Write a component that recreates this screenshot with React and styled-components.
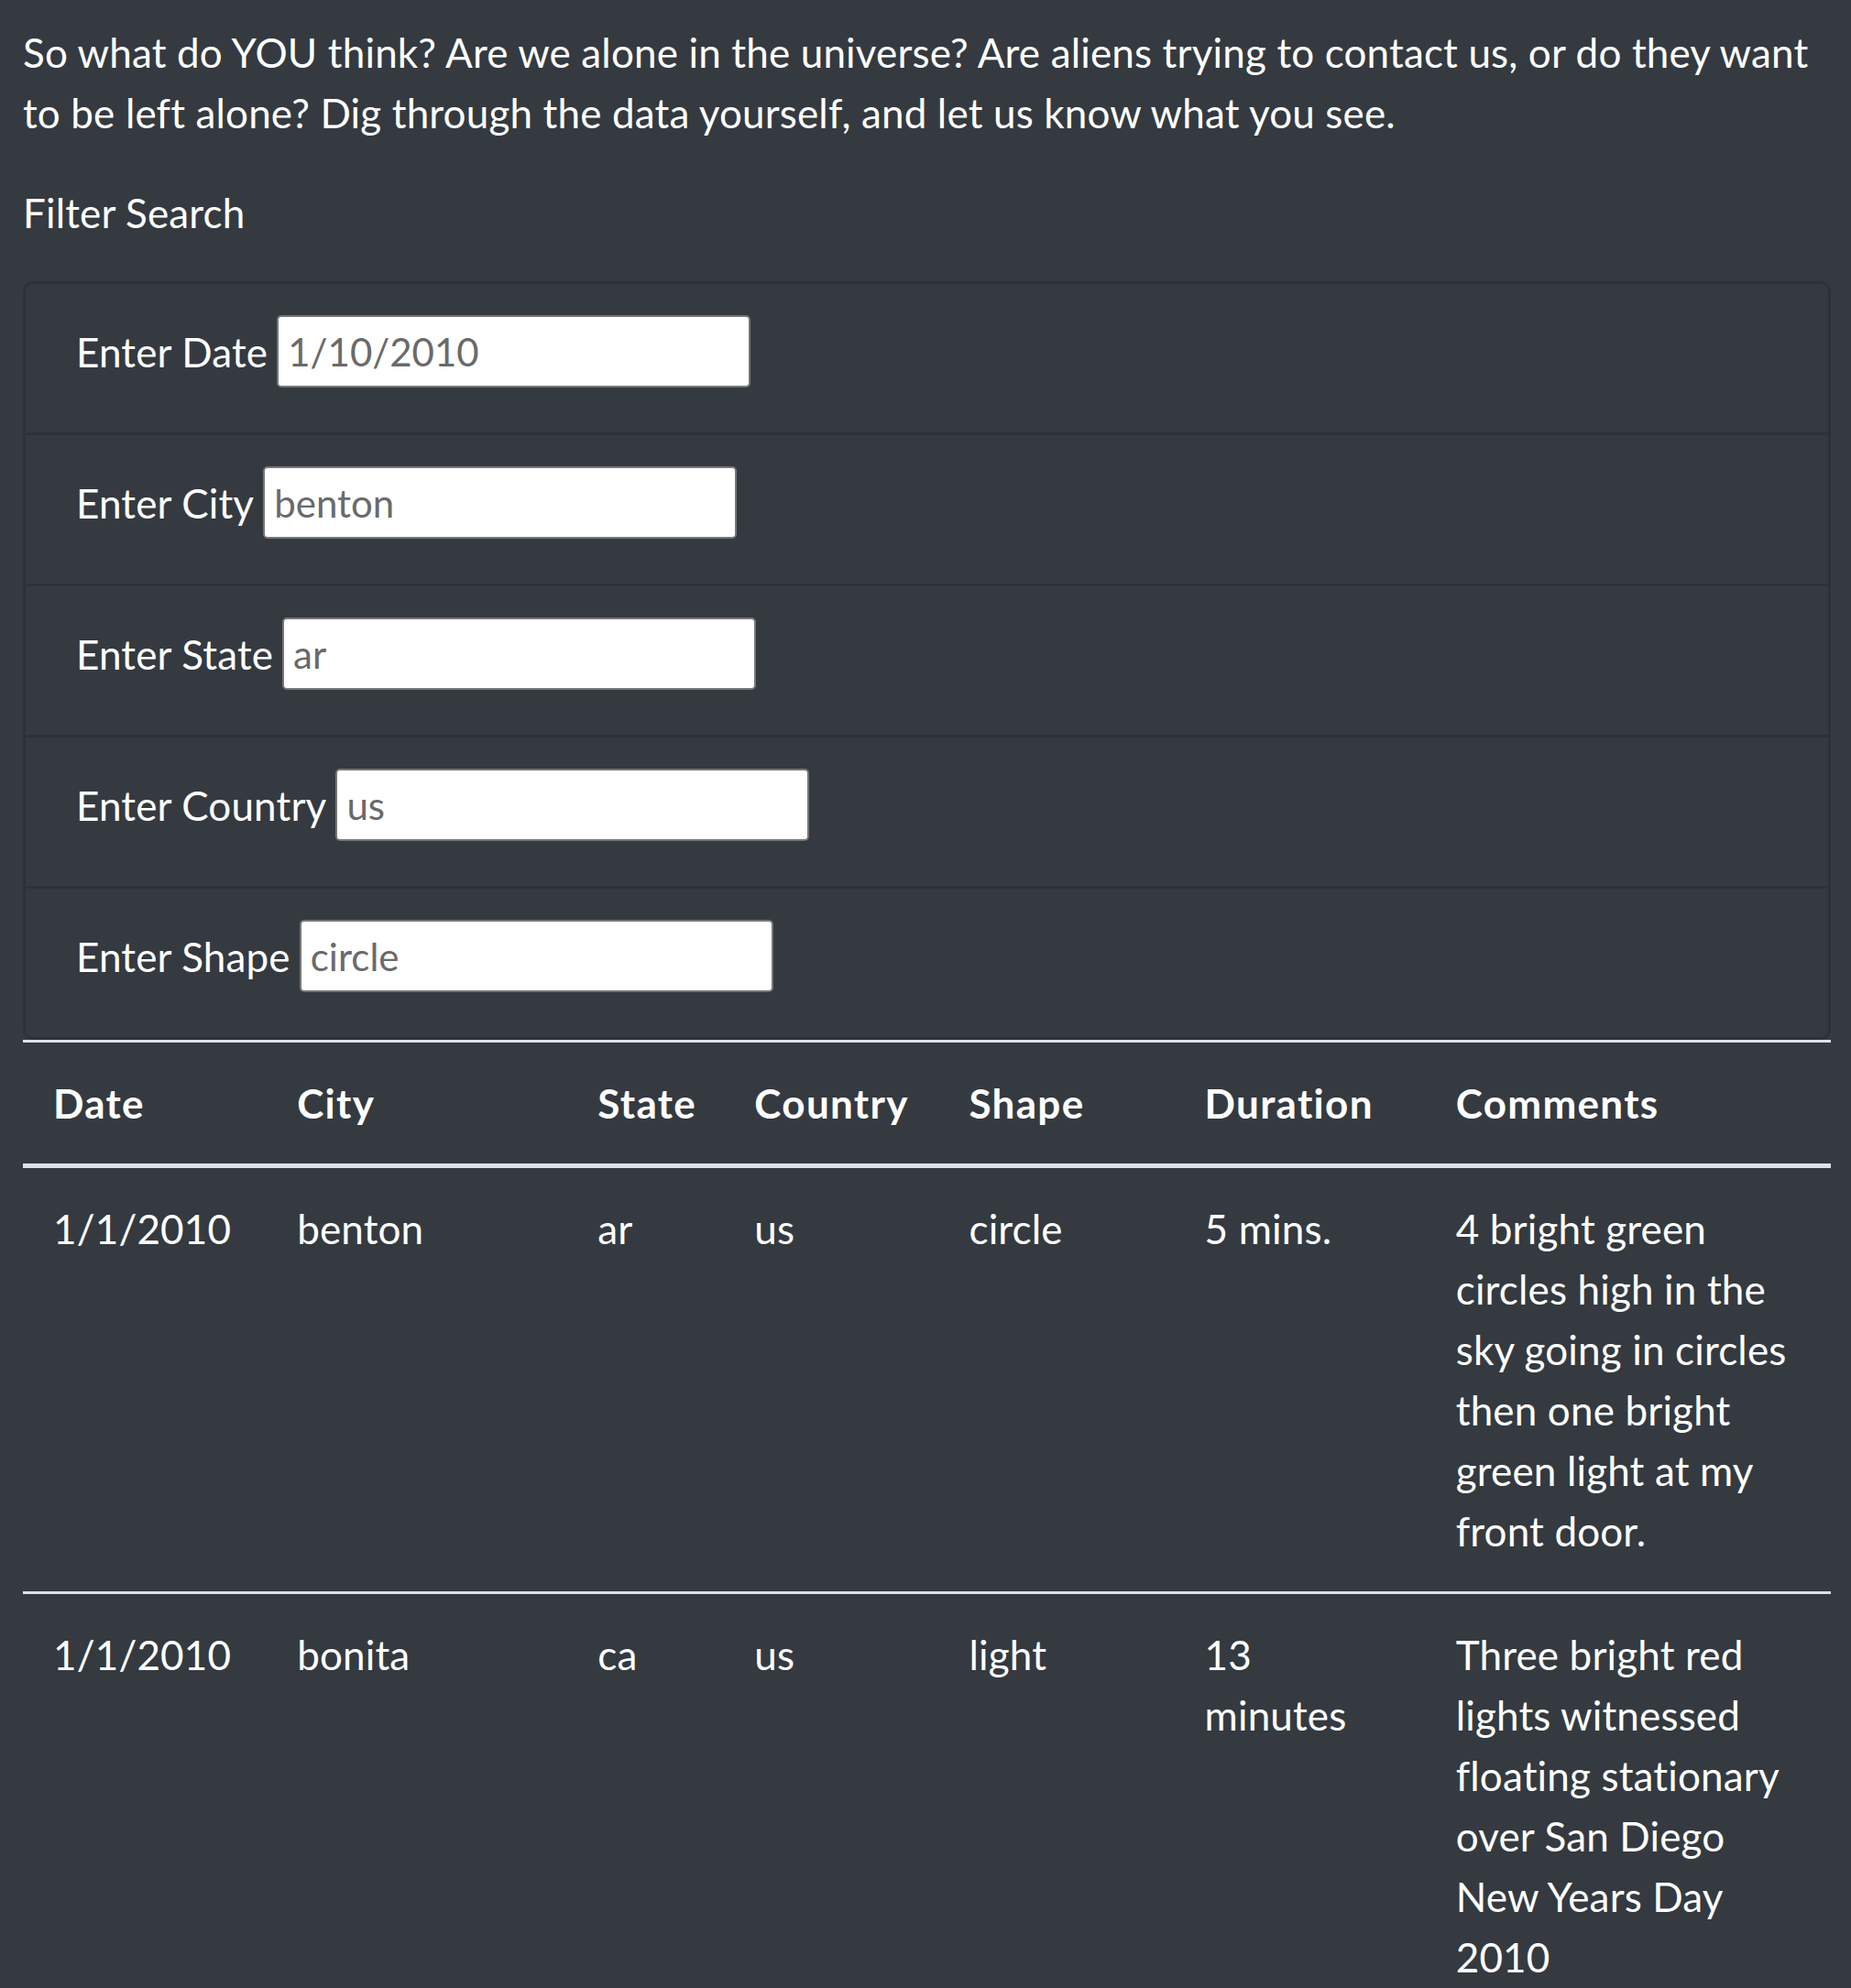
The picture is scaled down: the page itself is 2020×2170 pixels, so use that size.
import styled, { createGlobalStyle } from "styled-components";

const GlobalStyle = createGlobalStyle`
  html, body {
    margin: 0;
    padding: 0;
    background-color: #343a40;
  }
  body {
    font-family: Lato, "Noto Sans", "Liberation Sans", sans-serif;
    font-size: 44px;
    line-height: 66px;
    color: #fff;
    letter-spacing: 0.15px;
  }
`;

const Page = styled.div`
  min-height: 2170px;
  padding: 24px 22px 0 25px;
  box-sizing: border-box;
`;

const Intro = styled.p`
  margin: 0 0 43px 0;
`;

const FilterTitle = styled.p`
  margin: 0 0 42px 0;
`;

const FilterCard = styled.ul`
  list-style: none;
  margin: 0;
  padding: 0;
  border: 3px solid rgba(0, 0, 0, 0.125);
  border-radius: 11px;
  overflow: hidden;
`;

const FilterRow = styled.li`
  display: flex;
  align-items: center;
  gap: 10px;
  padding: 34px 55px 49px 55px;
  border-top: ${(p) => (p.$first ? "none" : "3px solid rgba(0, 0, 0, 0.125)")};
`;

const Label = styled.label`
  white-space: nowrap;
`;

const Input = styled.input`
  box-sizing: border-box;
  width: 517px;
  height: 79px;
  padding: 0 10px;
  border: 2px solid #767676;
  border-radius: 5px;
  background: #fff;
  font-family: inherit;
  font-size: 42px;
  color: #6a6a6a;
  outline: none;

  &::placeholder {
    color: #6a6a6a;
  }
`;

const Table = styled.table`
  width: 100%;
  table-layout: fixed;
  border-collapse: separate;
  border-spacing: 0;
`;

const Th = styled.th`
  text-align: left;
  font-weight: 700;
  letter-spacing: 1.3px;
  padding: 33px;
  vertical-align: bottom;
  border-top: 3px solid #dee2e6;
  border-bottom: 5px solid #dee2e6;
`;

const Td = styled.td`
  padding: 33px;
  vertical-align: top;
  border-top: ${(p) => (p.$first ? "none" : "3px solid #dee2e6")};
`;

const filters = [
  { label: "Enter Date", value: "1/10/2010" },
  { label: "Enter City", value: "benton" },
  { label: "Enter State", value: "ar" },
  { label: "Enter Country", value: "us" },
  { label: "Enter Shape", value: "circle" },
];

const columns = [
  { name: "Date", width: 266 },
  { name: "City", width: 328 },
  { name: "State", width: 171 },
  { name: "Country", width: 234 },
  { name: "Shape", width: 257 },
  { name: "Duration", width: 274 },
  { name: "Comments", width: 442 },
];

const sightings = [
  {
    datetime: "1/1/2010",
    city: "benton",
    state: "ar",
    country: "us",
    shape: "circle",
    duration: "5 mins.",
    comments:
      "4 bright green circles high in the sky going in circles then one bright green light at my front door.",
  },
  {
    datetime: "1/1/2010",
    city: "bonita",
    state: "ca",
    country: "us",
    shape: "light",
    duration: "13 minutes",
    comments:
      "Three bright red lights witnessed floating stationary over San Diego New Years Day 2010",
  },
];

export default function App() {
  return (
    <>
      <GlobalStyle />
      <Page>
        <Intro>
          So what do YOU think? Are we alone in the universe? Are aliens trying
          to contact us, or do they want to be left alone? Dig through the data
          yourself, and let us know what you see.
        </Intro>
        <FilterTitle>Filter Search</FilterTitle>
        <FilterCard>
          {filters.map((f, i) => (
            <FilterRow key={f.label} $first={i === 0}>
              <Label>{f.label}</Label>
              <Input type="text" placeholder={f.value} />
            </FilterRow>
          ))}
        </FilterCard>
        <Table>
          <colgroup>
            {columns.map((c) => (
              <col key={c.name} style={{ width: c.width }} />
            ))}
          </colgroup>
          <thead>
            <tr>
              {columns.map((c) => (
                <Th key={c.name}>{c.name}</Th>
              ))}
            </tr>
          </thead>
          <tbody>
            {sightings.map((s, i) => (
              <tr key={i}>
                <Td $first={i === 0}>{s.datetime}</Td>
                <Td $first={i === 0}>{s.city}</Td>
                <Td $first={i === 0}>{s.state}</Td>
                <Td $first={i === 0}>{s.country}</Td>
                <Td $first={i === 0}>{s.shape}</Td>
                <Td $first={i === 0}>{s.duration}</Td>
                <Td $first={i === 0}>{s.comments}</Td>
              </tr>
            ))}
          </tbody>
        </Table>
      </Page>
    </>
  );
}
